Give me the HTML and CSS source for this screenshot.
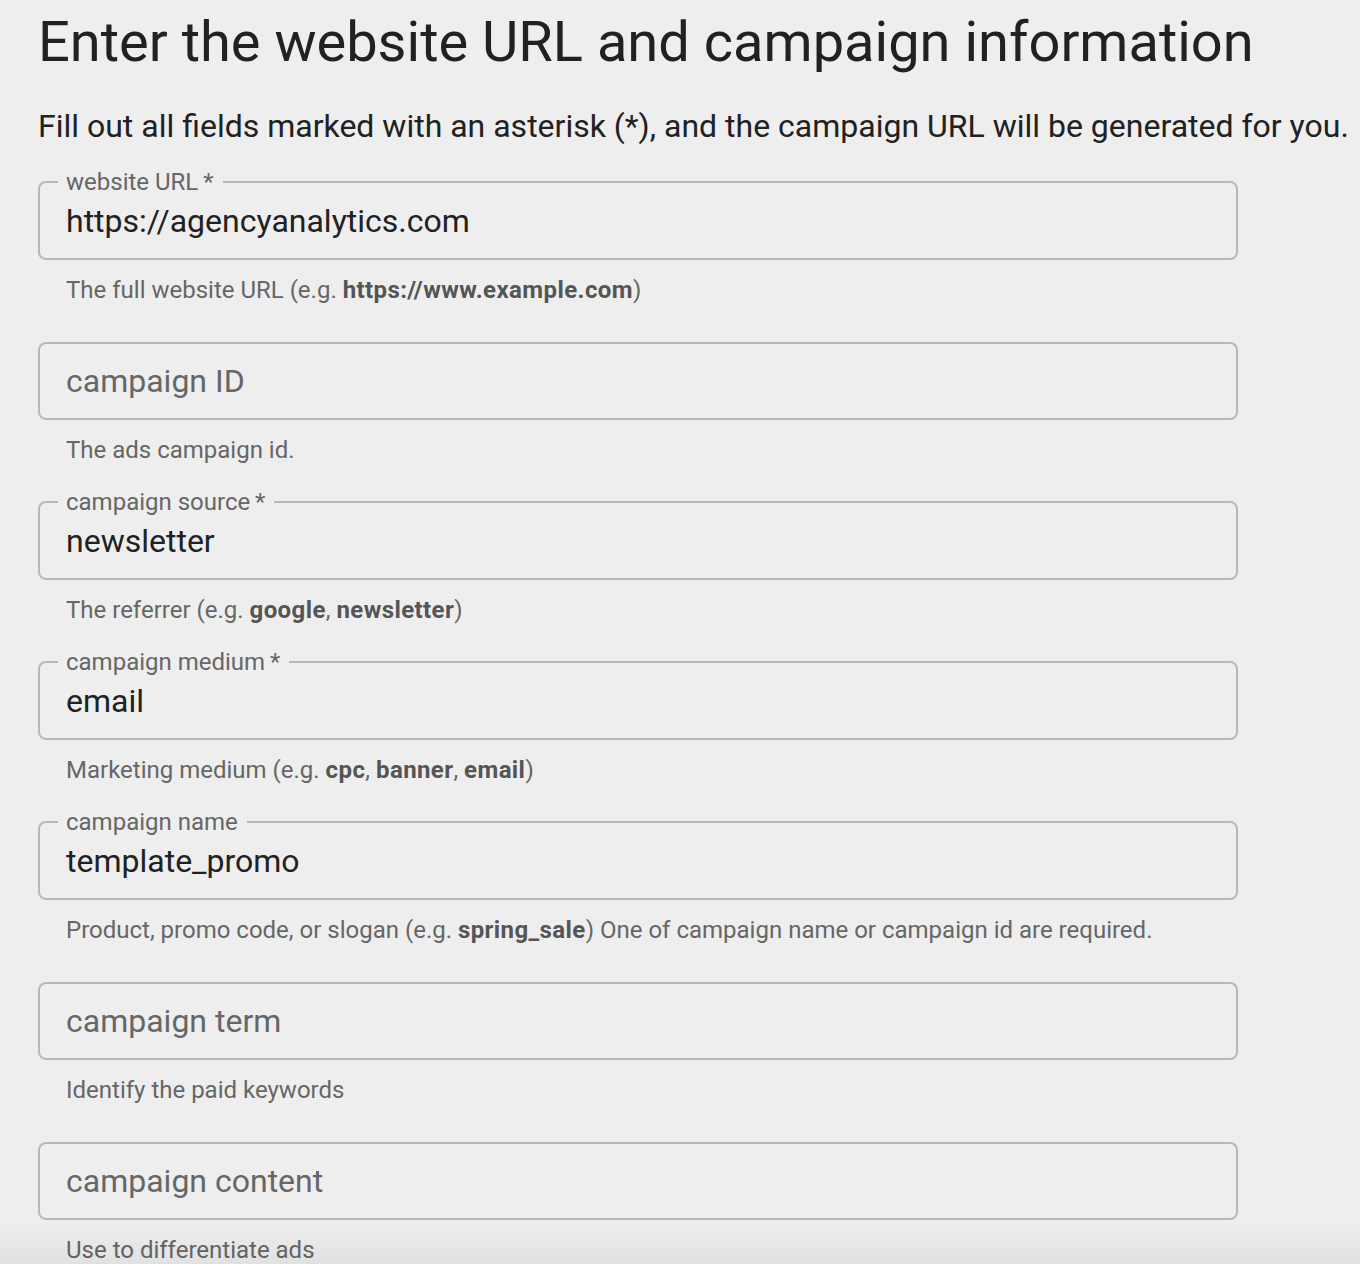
FILE: index.html
```html
<!DOCTYPE html>
<html lang="en">
<head>
  <meta charset="UTF-8">
  <title>Campaign URL Builder</title>
  <link rel="stylesheet" href="styles.css">
</head>
<body>

  <div class="builder">
    <h1>Enter the website URL and campaign information</h1>
    <p class="intro">Fill out all fields marked with an asterisk (*), and the campaign URL will be generated for you.</p>

    <div class="field">
      <div class="box">
        <input type="text" id="url" value="https://agencyanalytics.com">
        <fieldset class="notched"><legend>website URL&thinsp;*</legend></fieldset>
      </div>
      <p class="help">The full website URL (e.g. <b>https://www.example.com</b>)</p>
    </div>

    <div class="field">
      <div class="box">
        <input type="text" id="cid" placeholder="campaign ID">
        <fieldset></fieldset>
      </div>
      <p class="help">The ads campaign id.</p>
    </div>

    <div class="field">
      <div class="box">
        <input type="text" id="source" value="newsletter">
        <fieldset class="notched"><legend>campaign source&thinsp;*</legend></fieldset>
      </div>
      <p class="help">The referrer (e.g. <b>google</b>, <b>newsletter</b>)</p>
    </div>

    <div class="field">
      <div class="box">
        <input type="text" id="medium" value="email">
        <fieldset class="notched"><legend>campaign medium&thinsp;*</legend></fieldset>
      </div>
      <p class="help">Marketing medium (e.g. <b>cpc</b>, <b>banner</b>, <b>email</b>)</p>
    </div>

    <div class="field">
      <div class="box">
        <input type="text" id="name" value="template_promo">
        <fieldset class="notched"><legend>campaign name</legend></fieldset>
      </div>
      <p class="help">Product, promo code, or slogan (e.g. <b>spring_sale</b>) One of campaign name or campaign id are required.</p>
    </div>

    <div class="field">
      <div class="box">
        <input type="text" id="term" placeholder="campaign term">
        <fieldset></fieldset>
      </div>
      <p class="help">Identify the paid keywords</p>
    </div>

    <div class="field">
      <div class="box">
        <input type="text" id="content" placeholder="campaign content">
        <fieldset></fieldset>
      </div>
      <p class="help">Use to differentiate ads</p>
    </div>
  </div>

  <div class="fade"></div>

</body>
</html>
```

FILE: styles.css
```css
body {
  font-family: Roboto, 'Liberation Sans', sans-serif;
  margin: 0;
  background-color: #eeeeee;
  color: #222;
}

.builder {
  padding: 0 38px;
}

h1 {
  font-size: 56px;
  font-weight: 400;
  line-height: 1;
  margin: 0;
  padding-top: 14px;
  color: #212121;
}

.intro {
  font-size: 32px;
  line-height: 1;
  margin: 0;
  padding-top: 40px;
  white-space: nowrap;
  color: #212121;
}

.field {
  width: 1200px;
}

.intro + .field {
  margin-top: 40px;
}

.box {
  position: relative;
  height: 78px;
}

.box input {
  box-sizing: border-box;
  width: 100%;
  height: 100%;
  border: none;
  outline: none;
  background: transparent;
  padding: 0 28px;
  font-family: inherit;
  font-size: 32px;
  color: #212121;
}

.box input::placeholder {
  color: #666;
  opacity: 1;
}

.box fieldset {
  position: absolute;
  top: 0;
  left: 0;
  right: 0;
  bottom: 0;
  margin: 0;
  padding: 0 18px;
  border: 2px solid #b8b8b8;
  border-radius: 8px;
  pointer-events: none;
}

.box fieldset.notched {
  top: -12px;
}

.box legend {
  padding: 0 9px 0 8px;
  font-size: 24px;
  line-height: 24px;
  color: #666;
}

.help {
  margin: 0;
  height: 82px;
  padding: 16px 28px 0;
  box-sizing: border-box;
  font-size: 24px;
  color: #666;
}

.help b {
  color: #555;
  letter-spacing: 0.4px;
}

.fade {
  position: fixed;
  left: 0;
  right: 0;
  bottom: 0;
  height: 40px;
  background: linear-gradient(to bottom, rgba(0,0,0,0), rgba(0,0,0,0.05));
  pointer-events: none;
}
```
